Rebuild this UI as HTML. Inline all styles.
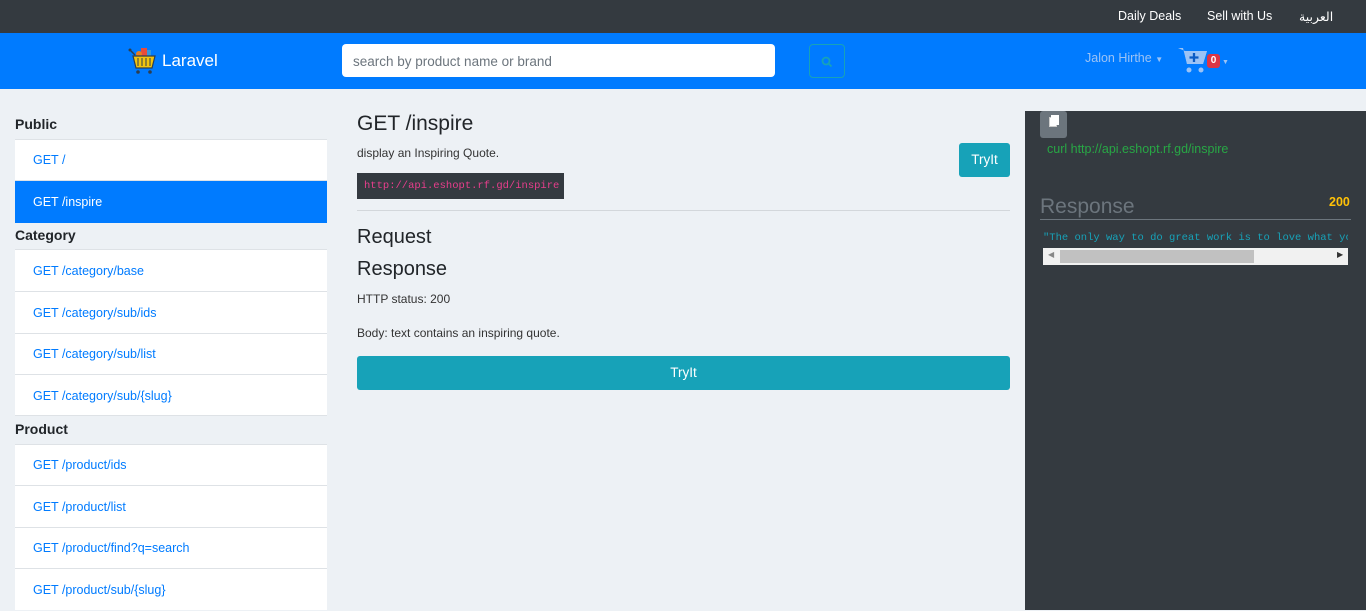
<!DOCTYPE html>
<html><head><meta charset="utf-8"><style>
*{box-sizing:border-box;margin:0;padding:0}
body{width:1366px;height:610px;overflow:hidden;background:#edf1f5;font-family:"Liberation Sans",sans-serif;font-size:13px;color:#212529;position:relative}
.top{height:33px;background:#343a40;color:#fff;font-size:12.5px}
.top span{position:absolute;top:9px}
.nav{position:absolute;top:33px;left:0;width:1366px;height:56px;background:#007bff}
.abs{position:absolute}
.side h4{position:absolute;left:15px;font-size:14px;font-weight:bold;color:#212529}
.item{position:absolute;left:15px;width:312px;background:#fff;border-top:1px solid #dee2e6;color:#007bff;padding-left:18px;font-size:12.5px}
.item.act{background:#007bff;color:#fff}
.btn{background:#17a2b8;color:#fff;border-radius:3px;text-align:center;font-size:13.5px}
</style></head><body>
<div class="top"><span style="left:1118px">Daily Deals</span><span style="left:1207px">Sell with Us</span><span style="left:1299px">العربية</span></div>
<div class="nav">
<svg class="abs" style="left:128px;top:13px" width="30" height="30" viewBox="0 0 30 30"><circle cx="2" cy="4" r="1.5" fill="#2c3e50"/><path d="M3 5l4 4" stroke="#2c3e50" stroke-width="1.5"/><rect x="13" y="2" width="6" height="8" fill="#e74c3c"/><rect x="19" y="4" width="4" height="6" fill="#3498db"/><circle cx="11" cy="8" r="3" fill="#e67e22"/><path d="M5 10h22l-3 12H8z" fill="#f1c40f" stroke="#2c3e50" stroke-width="1.2"/><path d="M10 12v8M14 12v8M18 12v8M22 12v8" stroke="#2c3e50"/><circle cx="10" cy="26" r="1.8" fill="#2c3e50"/><circle cx="22" cy="26" r="1.8" fill="#2c3e50"/></svg>
<div class="abs" style="left:162px;top:18px;color:#fff;font-size:17px">Laravel</div>
<div class="abs" style="left:342px;top:11px;width:433px;height:33px;background:#fff;border-radius:4px;padding:10px 11px;color:#6c757d;font-size:13.5px">search by product name or brand</div>
<div class="abs" style="left:809px;top:11px;width:36px;height:34px;border:1px solid #17a2b8;border-radius:4px"><svg style="margin:11px" width="12" height="12" viewBox="0 0 12 12"><circle cx="5" cy="5" r="3.5" fill="none" stroke="#17a2b8" stroke-width="1.8"/><path d="M7.5 7.5l3 3" stroke="#17a2b8" stroke-width="1.8"/></svg></div>
<div class="abs" style="left:1085px;top:18px;color:#9cc3f5;font-size:12.5px">Jalon Hirthe <span style="font-size:8px">▼</span></div>
<svg class="abs" style="left:1176px;top:12px" width="34" height="30" viewBox="0 0 32 30"><path d="M1 3h5l4 16h16l4-13H8" fill="#9cc3f5"/><path d="M7 6h23l-4 13H10z" fill="#9cc3f5"/><path d="M17 8v9M12.5 12.5h9" stroke="#0b5bc4" stroke-width="2.3"/><circle cx="12" cy="25" r="2.5" fill="#9cc3f5"/><circle cx="24" cy="25" r="2.5" fill="#9cc3f5"/></svg>
<div class="abs" style="left:1207px;top:21px;width:13px;height:14px;background:#dc3545;color:#fff;font-size:10px;font-weight:bold;text-align:center;border-radius:3px;line-height:14px">0</div>
<div class="abs" style="left:1222px;top:26px;color:#9cc3f5;font-size:7px">▼</div>
</div>
<div class="side">
<h4 style="top:116px">Public</h4>
<div class="item" style="top:139px;height:41px;line-height:40px">GET /</div>
<div class="item act" style="top:180px;height:43px;line-height:43px">GET /inspire</div>
<h4 style="top:227px">Category</h4>
<div class="item" style="top:249px;height:42px;line-height:42px">GET /category/base</div>
<div class="item" style="top:291px;height:42px;line-height:42px">GET /category/sub/ids</div>
<div class="item" style="top:333px;height:41px;line-height:41px">GET /category/sub/list</div>
<div class="item" style="top:374px;height:42px;line-height:42px;border-bottom:1px solid #dee2e6">GET /category/sub/{slug}</div>
<h4 style="top:421px">Product</h4>
<div class="item" style="top:444px;height:41px;line-height:41px">GET /product/ids</div>
<div class="item" style="top:485px;height:42px;line-height:42px">GET /product/list</div>
<div class="item" style="top:527px;height:41px;line-height:41px">GET /product/find?q=search</div>
<div class="item" style="top:568px;height:42px;line-height:42px">GET /product/sub/{slug}</div>
</div>
<div class="abs" style="left:357px;top:112px;font-size:21px">GET /inspire</div>
<div class="abs" style="left:357px;top:146px;font-size:12px;color:#333">display an Inspiring Quote.</div>
<div class="abs" style="left:357px;top:173px;width:207px;height:26px;background:#343a40;color:#e83e8c;font-family:'Liberation Mono',monospace;font-size:10.5px;padding:7px 7px;white-space:nowrap;overflow:hidden">http://api.eshopt.rf.gd/inspire</div>
<div class="abs btn" style="left:959px;top:143px;width:51px;height:34px;line-height:34px">TryIt</div>
<div class="abs" style="left:357px;top:210px;width:653px;border-top:1px solid #d3d7db"></div>
<div class="abs" style="left:357px;top:226px;font-size:20px">Request</div>
<div class="abs" style="left:357px;top:258px;font-size:20px">Response</div>
<div class="abs" style="left:357px;top:292px;font-size:12px;color:#333">HTTP status: 200</div>
<div class="abs" style="left:357px;top:326px;font-size:12px;color:#333">Body: text contains an inspiring quote.</div>
<div class="abs btn" style="left:357px;top:356px;width:653px;height:34px;line-height:34px">TryIt</div>
<div class="abs" style="left:1025px;top:111px;width:341px;height:499px;background:#343a40">
<div class="abs" style="left:15px;top:0;width:27px;height:27px;background:#6c757d;border-radius:3px"><div class="abs" style="left:9px;top:6px;width:8px;height:10px;background:#fff;border:1px solid #ccc"></div><div class="abs" style="left:11px;top:4px;width:8px;height:10px;background:#fff"></div></div>
<div class="abs" style="left:22px;top:31px;color:#28a745;font-size:12.5px">curl http://api.eshopt.rf.gd/inspire</div>
<div class="abs" style="left:15px;top:84px;color:#6c757d;font-size:21px">Response</div>
<div class="abs" style="left:304px;top:84px;color:#ffc107;font-size:12.5px;font-weight:bold">200</div>
<div class="abs" style="left:15px;top:108px;width:311px;border-top:1px solid #6c757d"></div>
<div class="abs" style="left:18px;top:121px;width:305px;overflow:hidden;white-space:nowrap;color:#17a2b8;font-family:'Liberation Mono',monospace;font-size:10.5px">"The only way to do great work is to love what you do."</div>
<div class="abs" style="left:18px;top:137px;width:305px;height:17px;background:#f1f1f1"><div class="abs" style="left:17px;top:2px;width:194px;height:13px;background:#c1c1c1"></div><div class="abs" style="left:5px;top:2px;font-size:8px;color:#888">◀</div><div class="abs" style="left:294px;top:2px;font-size:8px;color:#333">▶</div></div>
</div>
</body></html>
